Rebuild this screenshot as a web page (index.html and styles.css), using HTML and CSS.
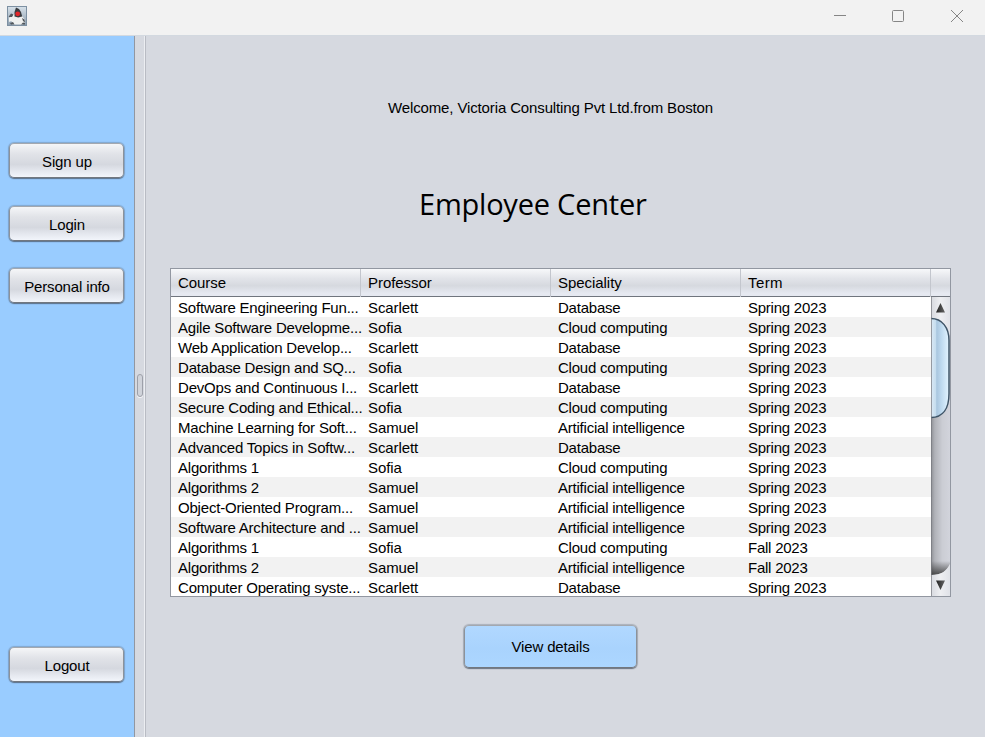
FILE: index.html
```html
<!DOCTYPE html>
<html lang="en">
<head>
<meta charset="utf-8">
<title>Employee Center</title>
<link rel="stylesheet" href="styles.css">
</head>
<body>
<header class="titlebar">
  <svg class="app-icon" width="20" height="20" viewBox="0 0 20 20">
    <defs><linearGradient id="g" x1="0" y1="0" x2="0" y2="1"><stop offset="0" stop-color="#d8e2ea"/><stop offset="1" stop-color="#8b9dae"/></linearGradient></defs>
    <rect x=".5" y=".5" width="19" height="19" fill="url(#g)" stroke="#7d90a2"/>
    <path d="M2 12l3-3 2-1 8 2 2.500 3 .5 3-2 2.500H5L4.500 15 2 16z" fill="#eff0ef"/>
    <path d="M9 1.500l3 1.500 2 3 1.200 4.500-4 1-3.700-1L7.500 6z" fill="#3a3d41"/>
    <path d="M1.500 11 4 7.500 6.500 8.500 5 11zM15 12l2.500 1.500.5 3-2-1.500zM3 17l3-1 1.500 2.500H4zM14 18.500l2-2 2 .5v1.500z" fill="#50565c"/>
    <circle cx="10.700" cy="7.800" r="2.400" fill="#e3262a"/>
  </svg>
  <svg class="window-controls" width="136" height="20" viewBox="0 0 136 20" fill="none" stroke="#858585">
    <path d="M4 9.500h12"/>
    <rect x="62.500" y="4.500" width="11" height="11" rx="1"/>
    <path d="M121 4l12 12M133 4l-12 12"/>
  </svg>
</header>
<div class="content">
  <nav class="sidebar">
    <button class="button">Sign up</button>
    <button class="button">Login</button>
    <button class="button">Personal info</button>
    <button class="button logout">Logout</button>
  </nav>
  <div class="divider"><span class="grip"></span></div>
  <main class="main">
    <p class="welcome">Welcome, Victoria Consulting Pvt Ltd.from Boston</p>
    <h1 class="title">Employee Center</h1>
    <section class="table">
      <div class="row head"><span>Course</span><span>Professor</span><span>Speciality</span><span class="term">Term</span><span></span></div>
      <div class="viewport">
        <div class="rows">
          <div class="row"><span>Software Engineering Fun...</span><span>Scarlett</span><span>Database</span><span>Spring 2023</span></div>
          <div class="row"><span>Agile Software Developme...</span><span>Sofia</span><span>Cloud computing</span><span>Spring 2023</span></div>
          <div class="row"><span>Web Application Develop...</span><span>Scarlett</span><span>Database</span><span>Spring 2023</span></div>
          <div class="row"><span>Database Design and SQ...</span><span>Sofia</span><span>Cloud computing</span><span>Spring 2023</span></div>
          <div class="row"><span>DevOps and Continuous I...</span><span>Scarlett</span><span>Database</span><span>Spring 2023</span></div>
          <div class="row"><span>Secure Coding and Ethical...</span><span>Sofia</span><span>Cloud computing</span><span>Spring 2023</span></div>
          <div class="row"><span>Machine Learning for Soft...</span><span>Samuel</span><span>Artificial intelligence</span><span>Spring 2023</span></div>
          <div class="row"><span>Advanced Topics in Softw...</span><span>Scarlett</span><span>Database</span><span>Spring 2023</span></div>
          <div class="row"><span>Algorithms 1</span><span>Sofia</span><span>Cloud computing</span><span>Spring 2023</span></div>
          <div class="row"><span>Algorithms 2</span><span>Samuel</span><span>Artificial intelligence</span><span>Spring 2023</span></div>
          <div class="row"><span>Object-Oriented Program...</span><span>Samuel</span><span>Artificial intelligence</span><span>Spring 2023</span></div>
          <div class="row"><span>Software Architecture and ...</span><span>Samuel</span><span>Artificial intelligence</span><span>Spring 2023</span></div>
          <div class="row"><span>Algorithms 1</span><span>Sofia</span><span>Cloud computing</span><span>Fall 2023</span></div>
          <div class="row"><span>Algorithms 2</span><span>Samuel</span><span>Artificial intelligence</span><span>Fall 2023</span></div>
          <div class="row"><span>Computer Operating syste...</span><span>Scarlett</span><span>Database</span><span>Spring 2023</span></div>
        </div>
        <svg class="scrollbar" width="19" height="299" viewBox="0 0 19 299">
          <defs>
            <linearGradient id="track"><stop offset="0" stop-color="#8d8f94"/><stop offset=".2" stop-color="#b0b2b8"/><stop offset=".6" stop-color="#cbcdd4"/><stop offset="1" stop-color="#d2d4dc"/></linearGradient>
            <linearGradient id="thumb"><stop offset="0" stop-color="#dbe9f5"/><stop offset=".25" stop-color="#c7deef"/><stop offset=".32" stop-color="#a9c6df"/><stop offset=".6" stop-color="#c0dbf0"/><stop offset="1" stop-color="#e3f4ff"/></linearGradient>
            <linearGradient id="cap"><stop offset="0" stop-color="#d7d9df"/><stop offset=".5" stop-color="#eeeff2"/><stop offset="1" stop-color="#e0e2e8"/></linearGradient>
            <linearGradient id="shade" x1="0" y1="0" x2="0" y2="1"><stop offset="0" stop-color="#333" stop-opacity="0"/><stop offset="1" stop-color="#333" stop-opacity=".85"/></linearGradient>
            <linearGradient id="arrow"><stop offset="0" stop-color="#222"/><stop offset="1" stop-color="#666"/></linearGradient>
          </defs>
          <rect width="19" height="299" fill="url(#track)"/>
          <path d="M0 264h19v3q-4 11-19 11z" fill="url(#shade)"/>
          <path d="M0 0h19v40q-1-15-19-18.500z" fill="url(#cap)"/>
          <path d="M0 278c11 0 15-4 19-11v32H0z" fill="url(#cap)"/>
          <path d="M0 21.500c11 0 18 9 18 22v53c0 15-6 24-18 24z" fill="url(#thumb)"/>
          <path d="M0 21.500c11 0 18 9 18 22v53c0 15-6 24-18 24" fill="none" stroke="#3f5568" stroke-width="1.500"/>
          <path d="M.5 0v299" stroke="#77797f" stroke-opacity=".7"/>
          <path d="M5 15.500 9.500 6l4.500 9.500zM5 283.500h9L9.500 293z" fill="url(#arrow)"/>
        </svg>
      </div>
    </section>
    <button class="button view">View details</button>
  </main>
</div>
</body>
</html>
```
FILE: styles.css
```css
* { box-sizing: border-box; }
body {
  margin: 0;
  height: 737px;
  overflow: hidden;
  display: flex;
  flex-direction: column;
  background: #d6d9e0;
  color: #000;
  font: 15px/20px "Liberation Sans", Arial, sans-serif;
}
.titlebar {
  height: 36px;
  flex: none;
  display: flex;
  justify-content: space-between;
  padding: 6px 19px 0 7px;
  background: #f2f2f2;
  border-bottom: 1px solid #d3d9e0;
}
.content { flex: 1; display: flex; min-height: 0; }
.sidebar {
  width: 134px;
  display: flex;
  flex-direction: column;
  align-items: flex-start;
  gap: 27.500px;
  padding: 107px 0 55px 9px;
  background: #99ccff;
}
.button {
  width: 115px;
  height: 35px;
  flex: none;
  padding: 3px 0 0 1px;
  border: 1px solid;
  border-color: #a4a8af #8d9299 #72777f;
  border-radius: 5px;
  background: linear-gradient(#f5f6f8 0%, #e1e3e8 30%, #d5d8df 62%, #e5e8ef 82%, #f2f5fb 100%);
  box-shadow: 0 1px 1px rgba(70, 80, 95, .6), 0 0 1px 1px rgba(90, 100, 115, .35);
  color: inherit;
  font: inherit;
  letter-spacing: -.15px;
}
.logout { margin-top: auto; }
.divider {
  width: 12px;
  flex: none;
  display: flex;
  align-items: center;
  justify-content: center;
  border-left: 1px solid #9297a1;
  border-right: 1px solid #b9bcc4;
  box-shadow: inset -1px 0 #eceef2;
}
.grip {
  width: 6px;
  height: 23px;
  margin-top: -3px;
  border: 1px solid #9da0a9;
  border-radius: 3px;
  background: #d0d3da;
  box-shadow: 0 1px #f4f5f7;
}
.main { flex: 1; display: flex; flex-direction: column; align-items: flex-start; padding: 62px 0 0 24px; }
.welcome { margin: 0 0 0 218px; letter-spacing: -.13px; }
.title {
  height: 44px;
  margin: 64px 0 0 249px;
  font: 400 29px/44px "Open Sans", "Noto Sans", sans-serif;
  letter-spacing: -.22px;
  white-space: nowrap;
}
.table {
  width: 781px;
  height: 329px;
  margin-top: 42px;
  border: 1px solid #9297a1;
  background: #fff;
}
.row {
  display: grid;
  grid-template-columns: repeat(4, 190px);
  height: 20px;
  line-height: 22px;
  letter-spacing: -.24px;
  white-space: nowrap;
}
.row span { padding-left: 7px; }
.row span:nth-child(1) { letter-spacing: -.2px; }
.row span:nth-child(2) { letter-spacing: -.1px; }
.row span:nth-child(3) { letter-spacing: -.22px; }
.rows .row:nth-child(even) { background: #f2f2f2; }
.head {
  height: 28px;
  grid-template-columns: repeat(4, 190px) 1fr;
  line-height: 28px;
  background: linear-gradient(#f7f8fa 0%, #e2e4e9 35%, #d6d9df 62%, #e6e9f1 90%, #e6e9f1 100%);
  border-bottom: 1px solid #70757e;
}
.row.head span { letter-spacing: -.05px; }
.row.head .term { letter-spacing: .4px; }
.head span:not(:last-child) { border-right: 1px solid #c3c6cd; }
.viewport { display: flex; height: 299px; overflow: hidden; }
.rows { width: 760px; flex: none; height: 299px; overflow: hidden; }
.scrollbar { flex: none; }
.view {
  width: 173px;
  height: 43px;
  margin: 28px 0 0 294px;
  padding: 1px 0 0;
  background: linear-gradient(#b1d8ff, #a9d3fd 55%, #acd6ff);
}
```
